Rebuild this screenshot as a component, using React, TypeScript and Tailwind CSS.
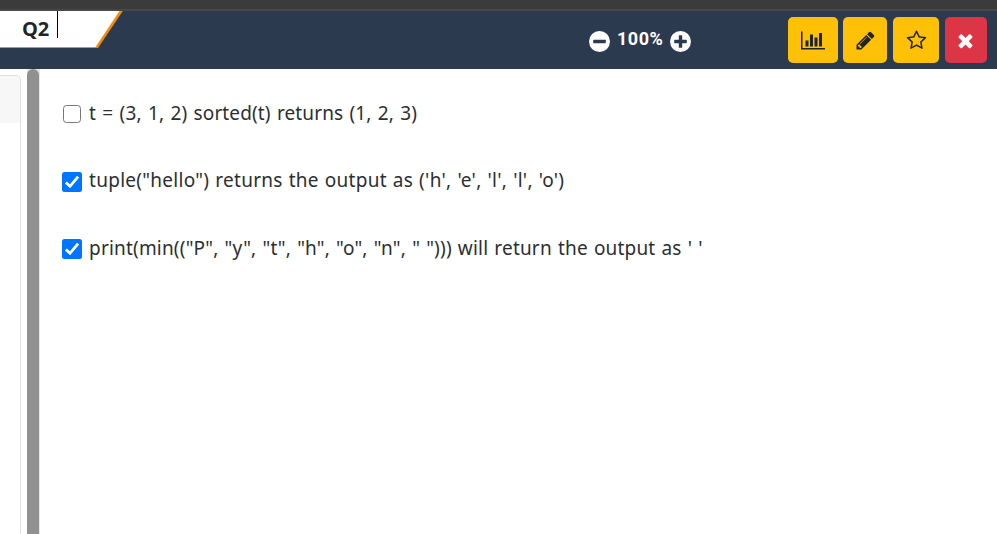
import React from "react";

const answers = [
  {
    text: "t = (3, 1, 2) sorted(t) returns (1, 2, 3)",
    checked: false,
    style: "tracking-[0.12px] [word-spacing:1.25px]",
  },
  {
    text: "tuple(\"hello\") returns the output as ('h', 'e', 'l', 'l', 'o')",
    checked: true,
    style: "-mt-0.5 tracking-[0.28px] [word-spacing:0.75px]",
  },
  {
    text: "print(min((\"P\", \"y\", \"t\", \"h\", \"o\", \"n\", \" \"))) will return the output as ' '",
    checked: true,
    style: "tracking-[0.19px] [word-spacing:0.95px]",
  },
];

function Glyph({ d, width = 1792 }: { d: string; width?: number }) {
  return (
    <svg viewBox={`0 0 ${width} 1792`} className="h-[21px] w-auto shrink-0" fill="currentColor">
      <path d={d} />
    </svg>
  );
}

const BAR_CHART =
  "M640 896v512h-256v-512h256zm384-512v1024h-256v-1024h256zm1024 1152v128h-2048v-1536h128v1408h1920zm-640-896v768h-256v-768h256zm384-384v1152h-256v-1152h256z";
const PENCIL =
  "M491 1536l91-91-235-235-91 91v107h128v128h107zm523-928q0-22-22-22-10 0-17 7l-542 542q-7 7-7 17 0 22 22 22 10 0 17-7l542-542q7-7 7-17zm-54-192l416 416-832 832h-416v-416zm683 96q0 53-37 90l-166 166-416-416 166-165q36-38 90-38 53 0 91 38l235 234q37 39 37 91z";
const STAR =
  "M1201 1004l306-297-422-62-189-382-189 382-422 62 306 297-73 421 378-199 377 199zm527-357q0 22-26 48l-363 354 86 500q1 7 1 20 0 50-41 50-19 0-40-12l-449-236-449 236q-22 12-40 12-21 0-31.5-14.5t-10.5-35.5q0-6 2-20l86-500-364-354q-25-27-25-48 0-37 56-46l502-73 225-455q19-41 49-41t49 41l225 455 502 73q56 9 56 46z";
const CLOSE =
  "M1490 1322q0 40-28 68l-136 136q-28 28-68 28t-68-28l-294-294-294 294q-28 28-68 28t-68-28l-136-136q-28-28-28-68t28-68l294-294-294-294q-28-28-28-68t28-68l136-136q28-28 68-28t68 28l294 294 294-294q28-28 68-28t68 28l136 136q28 28 28 68t-28 68l-294 294 294 294q28 28 28 68z";

function ZoomIcon({ plus = false }: { plus?: boolean }) {
  return (
    <svg viewBox="0 0 21 21" className="mt-1 size-[21px] shrink-0">
      <circle cx="10.5" cy="10.5" r="10.5" fill="#fff" />
      <rect x="4.2" y="8.8" width="12.6" height="3.4" rx="0.6" fill="#2c3a50" />
      {plus && <rect x="8.8" y="4.2" width="3.4" height="12.6" rx="0.6" fill="#2c3a50" />}
    </svg>
  );
}

function Checkbox({ checked }: { checked: boolean }) {
  if (!checked) {
    return <span className="ml-px mr-px mt-0.5 size-[18px] shrink-0 rounded-[3.5px] border-[1.5px] border-[#767676] bg-white" />;
  }
  return (
    <svg viewBox="0 0 20 20" className="mt-0.5 size-5 shrink-0">
      <rect width="20" height="20" rx="2.5" fill="#0075ff" />
      <path d="M3.9 10.4 8 14.3 16.1 4.6" fill="none" stroke="#fff" strokeWidth="2.8" />
    </svg>
  );
}

export default function App() {
  return (
    <div className="flex h-[534px] w-[997px] flex-col overflow-hidden bg-white font-['Noto_Sans','Open_Sans',sans-serif] text-[#212529]">
      <div className="h-[11px] shrink-0 border-b-2 border-[#484848] bg-[#3b3b3b]" />
      <header className="flex h-[58px] shrink-0 items-start bg-[#2c3a50]">
        <div className="grid h-[37px] w-[124px] shrink-0">
          <svg viewBox="0 0 124 37" className="col-start-1 row-start-1 h-[37px] w-[124px]">
            <path d="M0 0H122.8L98 37H0Z" fill="#f28c0c" />
            <path d="M0 0H119.5L95.5 36H0Z" fill="#fff" />
          </svg>
          <div className="col-start-1 row-start-1 flex">
            <span className="ml-[22px] mt-[4px] w-[35px] whitespace-nowrap font-['Open_Sans','Noto_Sans',sans-serif] text-[20px] font-bold leading-[27px] tracking-[-0.1px]">Q2</span>
            <span className="h-[27px] w-px bg-black" />
          </div>
        </div>
        <div className="ml-[465px] mt-4 flex w-[199px] shrink-0">
          <ZoomIcon />
          <span className="ml-[7px] mr-[6px] w-[47px] whitespace-nowrap font-['Roboto',sans-serif] text-[18px] font-bold leading-[23px] tracking-[0.5px] text-white">100%</span>
          <ZoomIcon plus />
        </div>
        <div className="mt-1.5 flex h-[46px]">
          <button className="mr-[5px] flex w-[50px] items-center justify-center rounded-[5px] bg-[#ffc107]">
            <Glyph d={BAR_CHART} width={2048} />
          </button>
          <button className="mr-1.5 flex w-11 items-center justify-center rounded-[5px] bg-[#ffc107]">
            <Glyph d={PENCIL} />
          </button>
          <button className="mr-1.5 flex w-[46px] items-center justify-center rounded-[5px] bg-[#ffc107]">
            <Glyph d={STAR} />
          </button>
          <button className="flex w-[42px] items-center justify-center rounded-[5px] bg-[#dc3545] pr-px text-white">
            <Glyph d={CLOSE} />
          </button>
        </div>
      </header>
      <div className="flex min-h-0 flex-1">
        <aside className="w-[27px] shrink-0 pt-1.5">
          <div className="h-full w-[21px] rounded-tr-[5px] border-r border-t border-[#dfdfdf]">
            <div className="h-[47px] rounded-tr-[4px] bg-[#f7f7f7]" />
          </div>
        </aside>
        <div className="w-[13px] shrink-0 bg-[#e6e6e6] pr-px">
          <div className="h-full rounded-t-[6px] bg-[#919191]" />
        </div>
        <main className="ml-[22px] mt-[29px] text-[#2b2f33]">
          {answers.map((a) => (
            <div key={a.text} className="mb-[37.5px] flex h-[30px] items-center">
              <Checkbox checked={a.checked} />
              <span className={`ml-[7px] whitespace-pre text-[19px] leading-[30px] ${a.style}`}>{a.text}</span>
            </div>
          ))}
        </main>
      </div>
    </div>
  );
}
